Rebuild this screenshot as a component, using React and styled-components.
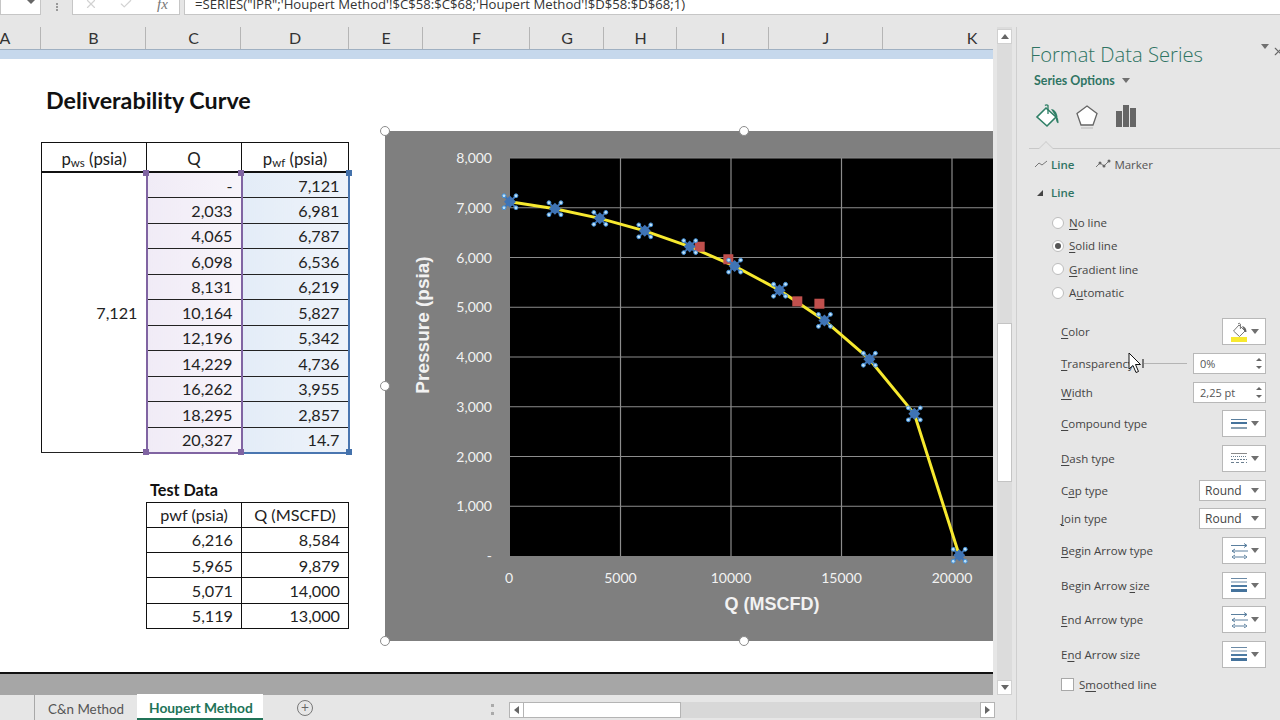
import React from "react"
import styled, { createGlobalStyle } from "styled-components"
import { X, Check } from "lucide-react"

const GlobalStyle = createGlobalStyle`
  html, body {
    margin: 0;
    padding: 0;
    background: #e6e6e6;
  }
`

const Window = styled.div`
  width: 1280px;
  height: 720px;
  overflow: hidden;
  display: flex;
  flex-direction: column;
  background: #e6e6e6;
  font-family: "Open Sans", "Liberation Sans", sans-serif;
`

/* formula bar, cut off by the top of the screenshot */
const FormulaBar = styled.div`
  height: 27px;
  flex-shrink: 0;
  display: flex;
  align-items: flex-start;
`

const BarBox = styled.div`
  width: ${(p) => p.$w}px;
  height: 15px;
  margin-left: ${(p) => p.$ml || 0}px;
  background: #fff;
  border: solid #c6c6c6;
  border-width: 0 1px 1px 1px;
  box-sizing: border-box;
  display: flex;
  align-items: center;
  overflow: hidden;
  flex-shrink: 0;
`

const NameArrow = styled.span`
  margin-left: 26px;
  margin-top: -6px;
  border: 4px solid transparent;
  border-top: 4px solid #666;
`

const Fx = styled.span`
  font-family: "Liberation Serif", serif;
  font-style: italic;
  font-size: 15px;
  color: #777;
  margin-left: 24px;
  margin-top: -6px;
`

const BarIcon = styled.span`
  display: flex;
  color: #d2d2d2;
  margin-left: ${(p) => p.$ml}px;
  margin-top: -6px;
`

const FormulaText = styled.span`
  font-size: 13.15px;
  color: #333;
  white-space: nowrap;
  margin-left: 10px;
  margin-top: -7px;
`

const Grip = styled.div`
  width: 2px;
  height: 8px;
  margin: 3px 0 0 15px;
  border-left: 2px dotted #999;
`

const Body = styled.div`
  flex: 1;
  display: flex;
  min-height: 0;
`

const Workbook = styled.div`
  width: 1016px;
  flex-shrink: 0;
  display: flex;
  flex-direction: column;
`

const SheetRow = styled.div`
  flex: 1;
  display: flex;
  min-height: 0;
`

const SheetColumn = styled.div`
  width: 993px;
  flex-shrink: 0;
  display: flex;
  flex-direction: column;
  background: #a6a6a6;
`

const ColHeaders = styled.div`
  height: 23px;
  flex-shrink: 0;
  display: flex;
  overflow: hidden;
  background: #e6e6e6;
  border-bottom: 1px solid #9fb0c2;
  box-sizing: border-box;
`

const ColHead = styled.div`
  width: ${(p) => p.$w}px;
  margin-left: ${(p) => p.$ml || 0}px;
  flex-shrink: 0;
  box-sizing: border-box;
  padding-left: 1px;
  border-right: 1px solid #b5b5b5;
  text-align: center;
  font-family: Lato, sans-serif;
  font-size: 16px;
  line-height: 22px;
  color: #333;
`

const SelectBand = styled.div`
  height: 9px;
  flex-shrink: 0;
  background: #c6d8ec;
`

const Sheet = styled.div`
  height: 613px;
  flex-shrink: 0;
  display: flex;
  overflow: hidden;
  background: #fff;
  border-bottom: 2px solid #111;
  font-family: Lato, "Liberation Sans", sans-serif;
  color: #222;
`

const TablesColumn = styled.div`
  width: 308px;
  margin-left: 41px;
  flex-shrink: 0;
  padding-top: 27px;
`

const Title = styled.h1`
  margin: 0 0 28px 5px;
  font-size: 23.3px;
  line-height: 28px;
  font-weight: 700;
  color: #111;
  white-space: nowrap;
`

const TableWrap = styled.div`
  position: relative;
`

const Table = styled.table`
  border-collapse: collapse;
  table-layout: fixed;
  width: ${(p) => p.$w}px;
  margin-left: ${(p) => p.$ml || 0}px;
  font-size: 16.2px;
  color: #222;

  col.wide {
    width: 105px;
  }
  col.mid {
    width: 95px;
  }
  col.end {
    width: 107px;
  }
`

const HeadCell = styled.td`
  height: 29.5px;
  padding: 2px 0 0;
  box-sizing: border-box;
  border: 1px solid #111;
  border-bottom-width: 2px;
  text-align: center;
  font-size: 16.8px;

  sub {
    font-size: 11.5px;
    vertical-align: -2px;
    line-height: 0;
  }
`

const Cell = styled.td`
  height: 25.5px;
  padding: 0 8px 0 0;
  box-sizing: border-box;
  border: 1px solid #111;
  text-align: right;
  background: ${(p) =>
    p.$range === "q"
      ? "linear-gradient(90deg, #f0ebf6, #f7f4fa)"
      : p.$range === "p"
        ? "linear-gradient(90deg, #e3ecf7, #eef3fa)"
        : "#fff"};
  border-left: ${(p) =>
    p.$range === "q"
      ? "2px solid #8064a2"
      : p.$range === "p"
        ? "2px solid #4a76b0"
        : "1px solid #111"};
  border-right: ${(p) =>
    p.$range === "q"
      ? "2px solid #8064a2"
      : p.$range === "p"
        ? "2px solid #4a76b0"
        : "1px solid #111"};
  border-bottom-color: ${(p) =>
    p.$last ? (p.$range === "q" ? "#8064a2" : "#4a76b0") : "#222"};
  border-bottom-width: ${(p) => (p.$last ? 2 : 1)}px;
`

const RangeHandle = styled.span`
  position: absolute;
  left: ${(p) => p.$x - 3}px;
  top: ${(p) => p.$y - 3}px;
  width: 6px;
  height: 6px;
  background: ${(p) => p.$color};
`

const TestLabel = styled.div`
  margin: 26px 0 2px 109px;
  height: 20px;
  font-size: 16.2px;
  line-height: 20px;
  font-weight: 700;
  color: #111;
`

const TestCell = styled.td`
  height: 25.3px;
  padding: ${(p) => (p.$center ? 0 : "0 8px 0 0")};
  box-sizing: border-box;
  border: 1px solid #111;
  text-align: ${(p) => (p.$center ? "center" : "right")};
`

const ChartFrame = styled.div`
  position: relative;
  width: 718px;
  height: 510px;
  margin: 72px 0 0 36px;
  flex-shrink: 0;
  background: #7f7f7f;
`

const SizeHandle = styled.span`
  position: absolute;
  left: ${(p) => p.$x - 5}px;
  top: ${(p) => p.$y - 5}px;
  width: 10px;
  height: 10px;
  box-sizing: border-box;
  border-radius: 50%;
  background: #fff;
  border: 1.5px solid #8c8c8c;
`

const GrayGap = styled.div`
  flex: 1;
`

const VScroll = styled.div`
  width: 23px;
  flex-shrink: 0;
  box-sizing: border-box;
  padding: 2px 4px 0;
  display: flex;
  flex-direction: column;
  background: linear-gradient(90deg, #e6e6e6 4px, #dcdcdc 4px, #dcdcdc 19px, #e6e6e6 19px);
`

const ScrollBtn = styled.div`
  width: 15px;
  height: 15px;
  flex-shrink: 0;
  background: #fff;
  border: 1px solid #d0d0d0;
  box-sizing: border-box;
  display: flex;
  align-items: center;
  justify-content: center;
  margin-top: ${(p) => (p.$bottom ? "auto" : "0")};
`

const Arrow = styled.span`
  width: 0;
  height: 0;
  border: 4px solid transparent;
  ${(p) => p.$dir === "up" && "border-bottom: 5px solid #666; border-top-width: 0;"}
  ${(p) => p.$dir === "down" && "border-top: 5px solid #666; border-bottom-width: 0;"}
  ${(p) => p.$dir === "left" && "border-right: 5px solid #666; border-left-width: 0;"}
  ${(p) => p.$dir === "right" && "border-left: 5px solid #666; border-right-width: 0;"}
`

const VThumb = styled.div`
  width: 15px;
  height: 159px;
  flex-shrink: 0;
  margin-top: 279px;
  background: #fff;
  border: 1px solid #c4c4c4;
  box-sizing: border-box;
`

const TabBar = styled.div`
  height: 25px;
  flex-shrink: 0;
  display: flex;
  align-items: stretch;
  padding-left: 34px;
  background: #e6e6e6;
`

const SheetTab = styled.div`
  display: flex;
  align-items: center;
  box-sizing: border-box;
  padding: ${(p) => (p.$active ? "2px 0 0 12px" : "2px 0 0 13px")};
  width: ${(p) => (p.$active ? 126 : 103)}px;
  font-family: Lato, sans-serif;
  font-size: ${(p) => (p.$active ? 13.8 : 13.4)}px;
  white-space: nowrap;
  color: ${(p) => (p.$active ? "#217358" : "#555")};
  font-weight: ${(p) => (p.$active ? 700 : 400)};
  background: ${(p) => (p.$active ? "#fff" : "transparent")};
  margin-top: ${(p) => (p.$active ? -1 : 0)}px;
  border-bottom: ${(p) => (p.$active ? "2px solid #217358" : "none")};
  border-left: ${(p) => (p.$active ? "none" : "1px solid #a8a8a8")};
`

const AddTab = styled.div`
  width: 16px;
  height: 16px;
  margin: 5px 0 0 34px;
  box-sizing: border-box;
  border: 1px solid #777;
  border-radius: 50%;
  color: #666;
  font-size: 14px;
  line-height: 13px;
  text-align: center;
`

const TabGrip = styled.div`
  width: 3px;
  height: 11px;
  margin: 9px 0 0 178px;
  border-left: 3px dotted #aaa;
  box-sizing: border-box;
`

const HScroll = styled.div`
  width: 486px;
  height: 16px;
  margin: 7px 0 0 15px;
  display: flex;
  background: #d8d8d8;
  flex-shrink: 0;
`

const HBtn = styled.div`
  width: 15px;
  height: 16px;
  flex-shrink: 0;
  margin-left: ${(p) => (p.$end ? "auto" : 0)};
  background: #fff;
  border: 1px solid #b4b4b4;
  box-sizing: border-box;
  display: flex;
  align-items: center;
  justify-content: center;
`

const HThumb = styled.div`
  width: 157px;
  background: #fff;
  border: 1px solid #b4b4b4;
  border-left: none;
  box-sizing: border-box;
`

/* format pane */
const Panel = styled.aside`
  flex: 1;
  min-width: 0;
  position: relative;
  box-sizing: border-box;
  border-left: 1px solid #cfcfcf;
  padding-top: 13px;
  color: #444;
  font-size: 11.5px;
`

const PanelTitle = styled.div`
  margin-left: 13px;
  height: 28px;
  font-size: 20.2px;
  line-height: 28px;
  font-weight: 300;
  color: #2f7463;
  white-space: nowrap;
`

const PanelMenu = styled.span`
  position: absolute;
  right: 11px;
  top: 22px;
`

const PanelClose = styled.span`
  position: absolute;
  right: -5px;
  top: 18px;
  display: flex;
  color: #666;
`

const SeriesOptions = styled.div`
  margin: 5px 0 0 17px;
  height: 15px;
  display: flex;
  align-items: center;
  gap: 7px;
  font-family: Lato, sans-serif;
  font-size: 12.4px;
  font-weight: 700;
  color: #2f7463;
`

const IconRow = styled.div`
  margin: 15px 0 0 17px;
  height: 26px;
  display: flex;
  gap: 14px;
`

const Divider = styled.div`
  position: relative;
  margin: 19px 0 0 12px;
  height: 1px;
  background: #c8c8c8;

  &::before {
    content: "";
    position: absolute;
    left: 12px;
    top: -5px;
    width: 9px;
    height: 9px;
    background: #e6e6e6;
    border-left: 1px solid #d2d2d2;
    border-top: 1px solid #d2d2d2;
    transform: rotate(45deg);
  }
`

const SubTabs = styled.div`
  margin: 7px 0 0 17px;
  height: 16px;
  display: flex;
  align-items: center;
`

const SubTab = styled.span`
  display: flex;
  align-items: center;
  gap: 3px;
  margin-right: 21px;
  color: ${(p) => (p.$active ? "#2f7463" : "#555")};
  font-weight: ${(p) => (p.$active ? 600 : 400)};
`

const SectionHead = styled.div`
  margin: 13px 0 0 20px;
  height: 15px;
  display: flex;
  align-items: center;
  gap: 8px;
  color: #2f7463;
  font-weight: 600;
`

const Corner = styled.span`
  width: 0;
  height: 0;
  border-style: solid;
  border-width: 0 0 6px 6px;
  border-color: transparent transparent #444 transparent;
`

const RadioList = styled.div`
  margin: 11px 0 0 35px;
  display: flex;
  flex-direction: column;
`

const RadioRow = styled.label`
  height: 23.3px;
  display: flex;
  align-items: center;
  gap: 5px;
`

const Radio = styled.span`
  width: 12px;
  height: 12px;
  box-sizing: border-box;
  border-radius: 50%;
  background: #fff;
  border: 1px solid #bdbdbd;
  display: flex;
  align-items: center;
  justify-content: center;

  &::after {
    content: "";
    width: 6px;
    height: 6px;
    border-radius: 50%;
    background: ${(p) => (p.$on ? "#555" : "transparent")};
  }
`

const Settings = styled.div`
  margin: 14px 14px 0 44px;
  display: flex;
  flex-direction: column;
  gap: 7.7px;
`

const SetRow = styled.div`
  position: relative;
  min-height: 21px;
  display: flex;
  align-items: center;
  justify-content: space-between;
`

const RowRight = styled.div`
  display: flex;
  align-items: center;
  gap: 6px;
`

const Label = styled.span`
  white-space: nowrap;

  u {
    text-underline-offset: 2px;
  }
`

const Slider = styled.div`
  position: relative;
  width: 45px;
  height: 1px;
  background: #b4b4b4;

  &::before {
    content: "";
    position: absolute;
    left: 0;
    top: -4px;
    width: 2px;
    height: 9px;
    background: #777;
  }
`

const Spin = styled.div`
  width: 73px;
  height: 21px;
  box-sizing: border-box;
  padding: 0 3px 0 6px;
  background: #fff;
  border: 1px solid #b8b8b8;
  display: flex;
  align-items: center;
  justify-content: space-between;
  font-size: 11px;
  color: #555;
`

const SpinArrows = styled.span`
  display: flex;
  flex-direction: column;
  gap: 5px;
`

const TinyArrow = styled.span`
  width: 0;
  height: 0;
  border: 3px solid transparent;
  ${(p) =>
    p.$up
      ? "border-bottom: 3px solid #666; border-top-width: 0;"
      : "border-top: 3px solid #666; border-bottom-width: 0;"}
`

const IconButton = styled.div`
  width: 44px;
  height: 27px;
  box-sizing: border-box;
  padding: 0 6px 0 8px;
  background: #fff;
  border: 1px solid #b8b8b8;
  display: flex;
  align-items: center;
  justify-content: space-between;
`

const Select = styled.div`
  width: 67px;
  height: 21px;
  box-sizing: border-box;
  padding: 0 6px 0 5px;
  background: #fff;
  border: 1px solid #b8b8b8;
  display: flex;
  align-items: center;
  justify-content: space-between;
  font-size: 12px;
  color: #444;
`

const Caret = styled.span`
  width: 0;
  height: 0;
  border: 4px solid transparent;
  border-top: 5px solid #707070;
  border-bottom-width: 0;
`

const CheckRow = styled.label`
  display: flex;
  align-items: center;
  gap: 5px;
  height: 14px;
  margin-top: 2px;
`

const CheckBox = styled.span`
  width: 13px;
  height: 13px;
  box-sizing: border-box;
  background: #fff;
  border: 1px solid #a8a8a8;
`

const Pointer = styled.svg`
  position: absolute;
  left: 67px;
  top: -1px;
`

const Q = [0, 2033, 4065, 6098, 8131, 10164, 12196, 14229, 16262, 18295, 20327]
const P = [7121, 6981, 6787, 6536, 6219, 5827, 5342, 4736, 3955, 2857, 14.7]
const TEST = [
  ["6,216", "8,584", 8584, 6216],
  ["5,965", "9,879", 9879, 5965],
  ["5,071", "14,000", 14000, 5071],
  ["5,119", "13,000", 13000, 5119],
]
const QTEXT = ["-", "2,033", "4,065", "6,098", "8,131", "10,164", "12,196", "14,229", "16,262", "18,295", "20,327"]
const PTEXT = ["7,121", "6,981", "6,787", "6,536", "6,219", "5,827", "5,342", "4,736", "3,955", "2,857", "14.7"]

const toX = (q) => 125 + q * 0.0221
const toY = (p) => 425 - p * 0.04975

function Chart() {
  const grey = "#8c8c8c"
  const ticks = [0, 1000, 2000, 3000, 4000, 5000, 6000, 7000, 8000]
  const xTicks = [0, 5000, 10000, 15000, 20000]
  return (
    <svg width="718" height="510" viewBox="0 0 718 510">
      <rect x="125" y="27" width="593" height="398" fill="#000" />
      {ticks.slice(1).map((t) => (
        <line key={t} x1="125" x2="718" y1={toY(t)} y2={toY(t)} stroke={grey} strokeWidth="1.2" />
      ))}
      {[5000, 10000, 15000, 20000, 25000].map((t) => (
        <line key={t} x1={toX(t)} x2={toX(t)} y1="27" y2="425" stroke={grey} strokeWidth="1.2" />
      ))}
      {ticks.map((t) => (
        <text key={t} x="107" y={toY(t) + 5} textAnchor="end" fill="#f2f2f2" fontFamily="Lato" fontSize="14">
          {t === 0 ? "-" : t.toLocaleString("en-US")}
        </text>
      ))}
      {xTicks.map((t) => (
        <text key={t} x={toX(t) - (t === 0 ? 1 : 0)} y="452" textAnchor="middle" fill="#f2f2f2" fontFamily="Lato" fontSize="14">
          {t}
        </text>
      ))}
      <text
        transform="translate(44 194) rotate(-90)"
        textAnchor="middle"
        fill="#f2f2f2"
        fontFamily="Liberation Sans"
        fontWeight="700"
        fontSize="19"
      >
        Pressure (psia)
      </text>
      <text x="387" y="479" textAnchor="middle" fill="#f2f2f2" fontFamily="Liberation Sans" fontWeight="700" fontSize="18">
        Q (MSCFD)
      </text>
      <polyline
        points={Q.map((q, i) => `${toX(q)},${toY(P[i])}`).join(" ")}
        fill="none"
        stroke="#f7e92f"
        strokeWidth="3"
        strokeLinejoin="round"
      />
      {TEST.map(([, , q, p]) => (
        <rect key={q} x={toX(q) - 5} y={toY(p) - 5} width="10" height="10" fill="#c0504d" />
      ))}
      {Q.map((q, i) => {
        const x = toX(q)
        const y = toY(P[i])
        return (
          <g key={q}>
            <path
              d={`M${x - 6} ${y - 6}L${x + 6} ${y + 6}M${x + 6} ${y - 6}L${x - 6} ${y + 6}`}
              stroke="#3f74b5"
              strokeWidth="2"
            />
            <path d={`M${x} ${y - 6}L${x + 6} ${y}L${x} ${y + 6}L${x - 6} ${y}Z`} fill="#3f74b5" />
            {[[-6, -6], [6, -6], [-6, 6], [6, 6]].map(([dx, dy]) => (
              <circle key={`${dx}${dy}`} cx={x + dx} cy={y + dy} r="1.9" fill="#bfe0f7" stroke="#3f8fd8" strokeWidth="1" />
            ))}
          </g>
        )
      })}
    </svg>
  )
}

function BucketIcon() {
  const fill = "#2f7f66"
  return (
    <svg width="26" height="26" viewBox="0 0 26 26">
      <path d="M12 5L22 14L13 23L3 14Z" fill="#fff" stroke={fill} strokeWidth="1.6" />
      <path d="M11 2.5a2 2 0 0 1 3 0V11" fill="none" stroke={fill} strokeWidth="1.3" />
      <path d="M22 14c2-1 2.5 4 2.5 6-1.5 1-3-3-2.5-6Z" fill={fill} />
      <path d="M17 6c3 0 6 3 6.5 8h-1.5Z" fill={fill} />
    </svg>
  )
}

function ColorIcon() {
  return (
    <svg width="18" height="20" viewBox="0 0 18 20">
      <path d="M8 3L14 9L8.5 14.5L2.5 9Z" fill="#fff" stroke="#777" strokeWidth="1" />
      <path d="M7 2a1.5 1.5 0 0 1 2.4 0V7" fill="none" stroke="#777" strokeWidth="1" />
      <path d="M11 4c3 .5 4.5 3 4.5 6h-1.5Z" fill="#666" />
      <rect x="0" y="15" width="16" height="5" fill="#f7e92f" />
    </svg>
  )
}

function PentagonIcon() {
  return (
    <svg width="26" height="26" viewBox="0 0 26 26">
      <path d="M13 3L23 10.5L19 22H7L3 10.5Z" fill="#fff" stroke="#666" strokeWidth="1.3" />
      <path d="M7 25H19" stroke="#cfcfcf" strokeWidth="2" />
    </svg>
  )
}

function BarsIcon() {
  return (
    <svg width="26" height="26" viewBox="0 0 26 26">
      <rect x="2" y="8" width="6" height="16" fill="#666" />
      <rect x="9" y="2" width="6" height="22" fill="#666" />
      <rect x="16" y="5" width="6" height="19" fill="#666" />
    </svg>
  )
}

function WiggleIcon() {
  return (
    <svg width="14" height="10" viewBox="0 0 14 10">
      <path d="M1 8L5 4L8 6L13 2" fill="none" stroke="#777" strokeWidth="1" />
    </svg>
  )
}

function MarkerIcon() {
  return (
    <svg width="16" height="10" viewBox="0 0 16 10">
      <path d="M1 8L5 4L9 7L15 1" fill="none" stroke="#777" strokeWidth="1" />
      <circle cx="5" cy="4" r="1.5" fill="#666" />
      <circle cx="9" cy="7" r="1.5" fill="#666" />
      <circle cx="14" cy="2" r="1.5" fill="#666" />
    </svg>
  )
}

function CompoundIcon() {
  return (
    <svg width="16" height="12" viewBox="0 0 16 12">
      <rect y="1" width="16" height="1" fill="#5a7f9e" />
      <rect y="4" width="16" height="2" fill="#45739c" />
      <rect y="9" width="16" height="2" fill="#8aa0b2" />
    </svg>
  )
}

function DashIcon() {
  return (
    <svg width="16" height="12" viewBox="0 0 16 12">
      <path d="M0 1.5H16" stroke="#8a8a8a" strokeWidth="1" />
      <path d="M0 4.5H16" stroke="#6b7f90" strokeWidth="1" strokeDasharray="1 1" />
      <path d="M0 7.5H16" stroke="#6b7f90" strokeWidth="1" strokeDasharray="2 1" />
      <path d="M0 10.5H16" stroke="#6b7f90" strokeWidth="1" strokeDasharray="3 2" />
    </svg>
  )
}

function ArrowsIcon() {
  return (
    <svg width="17" height="16" viewBox="0 0 17 16">
      <path d="M0 2.5H16M13 .5L16 2.5L13 4.5" fill="none" stroke="#5a7f9e" strokeWidth="1" />
      <path d="M17 8H1M4 6L1 8L4 10" fill="none" stroke="#5a7f9e" strokeWidth="1" />
      <path d="M3 14H14M4 12L1 14L4 16M13 12L16 14L13 16" fill="none" stroke="#5a7f9e" strokeWidth="1" />
    </svg>
  )
}

function SizeIcon() {
  return (
    <svg width="16" height="15" viewBox="0 0 16 15">
      <rect y="0" width="16" height="1" fill="#6b8aa6" />
      <rect y="3.5" width="16" height="1" fill="#6b8aa6" />
      <rect y="7" width="16" height="2" fill="#4d7ba3" />
      <rect y="11" width="16" height="3" fill="#45739c" />
    </svg>
  )
}

const ICON_ROWS_TOP = [
  ["C", "ompound type", CompoundIcon],
  ["D", "ash type", DashIcon],
]

function IconSetting({ label, icon: Icon }) {
  return (
    <SetRow>
      <Label>{label}</Label>
      <IconButton>
        <Icon />
        <Caret />
      </IconButton>
    </SetRow>
  )
}

function Spinner({ value }) {
  return (
    <Spin>
      {value}
      <SpinArrows>
        <TinyArrow $up />
        <TinyArrow />
      </SpinArrows>
    </Spin>
  )
}

export default function App() {
  const columns = [
    ["A", 72, -31],
    ["B", 105],
    ["C", 95],
    ["D", 108],
    ["E", 74],
    ["F", 107],
    ["G", 74],
    ["H", 73],
    ["I", 92],
    ["J", 114],
    ["K", 178],
  ]
  const purple = "#8064a2"
  const blue = "#4472ac"
  return (
    <Window>
      <GlobalStyle />
      <FormulaBar>
        <BarBox $w={41}>
          <NameArrow />
        </BarBox>
        <Grip />
        <BarBox $w={108} $ml={14}>
          <BarIcon $ml={11}>
            <X size={14} />
          </BarIcon>
          <BarIcon $ml={21}>
            <Check size={14} />
          </BarIcon>
          <Fx>fx</Fx>
        </BarBox>
        <BarBox $w={1100} $ml={4}>
          <FormulaText>=SERIES("IPR";'Houpert Method'!$C$58:$C$68;'Houpert Method'!$D$58:$D$68;1)</FormulaText>
        </BarBox>
      </FormulaBar>
      <Body>
        <Workbook>
          <SheetRow>
            <SheetColumn>
              <ColHeaders>
                {columns.map(([name, w, ml]) => (
                  <ColHead key={name} $w={w} $ml={ml}>
                    {name}
                  </ColHead>
                ))}
              </ColHeaders>
              <SelectBand />
              <Sheet>
                <TablesColumn>
                  <Title>Deliverability Curve</Title>
                  <TableWrap>
                    <Table $w={307}>
                      <colgroup>
                        <col className="wide" />
                        <col className="mid" />
                        <col className="end" />
                      </colgroup>
                      <tbody>
                        <tr>
                          <HeadCell>
                            p<sub>ws</sub> (psia)
                          </HeadCell>
                          <HeadCell>Q</HeadCell>
                          <HeadCell>
                            p<sub>wf</sub> (psia)
                          </HeadCell>
                        </tr>
                        {QTEXT.map((q, i) => (
                          <tr key={q}>
                            {i === 0 && <Cell rowSpan={11}>7,121</Cell>}
                            <Cell $range="q" $last={i === 10}>
                              {q}
                            </Cell>
                            <Cell $range="p" $last={i === 10}>
                              {PTEXT[i]}
                            </Cell>
                          </tr>
                        ))}
                      </tbody>
                    </Table>
                    <RangeHandle $x={105} $y={31} $color={purple} />
                    <RangeHandle $x={200} $y={31} $color={purple} />
                    <RangeHandle $x={308} $y={31} $color={blue} />
                    <RangeHandle $x={105} $y={310} $color={purple} />
                    <RangeHandle $x={200} $y={310} $color={purple} />
                    <RangeHandle $x={308} $y={310} $color={blue} />
                  </TableWrap>
                  <TestLabel>Test Data</TestLabel>
                  <Table $w={202} $ml={105}>
                    <colgroup>
                      <col className="mid" />
                      <col className="end" />
                    </colgroup>
                    <tbody>
                      <tr>
                        <TestCell $center>pwf (psia)</TestCell>
                        <TestCell $center>Q (MSCFD)</TestCell>
                      </tr>
                      {TEST.map(([pwf, q]) => (
                        <tr key={pwf}>
                          <TestCell>{pwf}</TestCell>
                          <TestCell>{q}</TestCell>
                        </tr>
                      ))}
                    </tbody>
                  </Table>
                </TablesColumn>
                <ChartFrame>
                  <Chart />
                  <SizeHandle $x={0} $y={0} />
                  <SizeHandle $x={359} $y={0} />
                  <SizeHandle $x={0} $y={255} />
                  <SizeHandle $x={0} $y={510} />
                  <SizeHandle $x={359} $y={510} />
                </ChartFrame>
              </Sheet>
              <GrayGap />
            </SheetColumn>
            <VScroll>
              <ScrollBtn>
                <Arrow $dir="up" />
              </ScrollBtn>
              <VThumb />
              <ScrollBtn $bottom>
                <Arrow $dir="down" />
              </ScrollBtn>
            </VScroll>
          </SheetRow>
          <TabBar>
            <SheetTab>C&amp;n Method</SheetTab>
            <SheetTab $active>Houpert Method</SheetTab>
            <AddTab>+</AddTab>
            <TabGrip />
            <HScroll>
              <HBtn>
                <Arrow $dir="left" />
              </HBtn>
              <HThumb />
              <HBtn $end>
                <Arrow $dir="right" />
              </HBtn>
            </HScroll>
          </TabBar>
        </Workbook>
        <Panel>
          <PanelMenu>
            <Caret />
          </PanelMenu>
          <PanelClose>
            <X size={13} />
          </PanelClose>
          <PanelTitle>Format Data Series</PanelTitle>
          <SeriesOptions>
            Series Options
            <Caret />
          </SeriesOptions>
          <IconRow>
            <BucketIcon />
            <PentagonIcon />
            <BarsIcon />
          </IconRow>
          <Divider />
          <SubTabs>
            <SubTab $active>
              <WiggleIcon />
              Line
            </SubTab>
            <SubTab>
              <MarkerIcon />
              Marker
            </SubTab>
          </SubTabs>
          <SectionHead>
            <Corner />
            Line
          </SectionHead>
          <RadioList>
            <RadioRow>
              <Radio />
              <Label>
                <u>N</u>o line
              </Label>
            </RadioRow>
            <RadioRow>
              <Radio $on />
              <Label>
                <u>S</u>olid line
              </Label>
            </RadioRow>
            <RadioRow>
              <Radio />
              <Label>
                <u>G</u>radient line
              </Label>
            </RadioRow>
            <RadioRow>
              <Radio />
              <Label>
                A<u>u</u>tomatic
              </Label>
            </RadioRow>
          </RadioList>
          <Settings>
            <SetRow>
              <Label>
                <u>C</u>olor
              </Label>
              <IconButton>
                <ColorIcon />
                <Caret />
              </IconButton>
            </SetRow>
            <SetRow>
              <Label>
                <u>T</u>ransparency
              </Label>
              <RowRight>
                <Slider />
                <Spinner value="0%" />
              </RowRight>
              <Pointer width="13" height="22" viewBox="0 0 13 22">
                <path d="M1 1V17L5 13.5L8 20.5L10.5 19.5L7.5 12.5H12.5Z" fill="#fff" stroke="#111" strokeWidth="1" />
              </Pointer>
            </SetRow>
            <SetRow>
              <Label>
                <u>W</u>idth
              </Label>
              <Spinner value="2,25 pt" />
            </SetRow>
            {ICON_ROWS_TOP.map(([key, rest, icon]) => (
              <IconSetting
                key={key}
                icon={icon}
                label={
                  <>
                    <u>{key}</u>
                    {rest}
                  </>
                }
              />
            ))}
            <SetRow>
              <Label>
                C<u>a</u>p type
              </Label>
              <Select>
                Round
                <Caret />
              </Select>
            </SetRow>
            <SetRow>
              <Label>
                <u>J</u>oin type
              </Label>
              <Select>
                Round
                <Caret />
              </Select>
            </SetRow>
            <IconSetting
              icon={ArrowsIcon}
              label={
                <>
                  <u>B</u>egin Arrow type
                </>
              }
            />
            <IconSetting
              icon={SizeIcon}
              label={
                <>
                  Begin Arrow <u>s</u>ize
                </>
              }
            />
            <IconSetting
              icon={ArrowsIcon}
              label={
                <>
                  <u>E</u>nd Arrow type
                </>
              }
            />
            <IconSetting
              icon={SizeIcon}
              label={
                <>
                  E<u>n</u>d Arrow size
                </>
              }
            />
            <CheckRow>
              <CheckBox />
              <Label>
                S<u>m</u>oothed line
              </Label>
            </CheckRow>
          </Settings>
        </Panel>
      </Body>
    </Window>
  )
}
